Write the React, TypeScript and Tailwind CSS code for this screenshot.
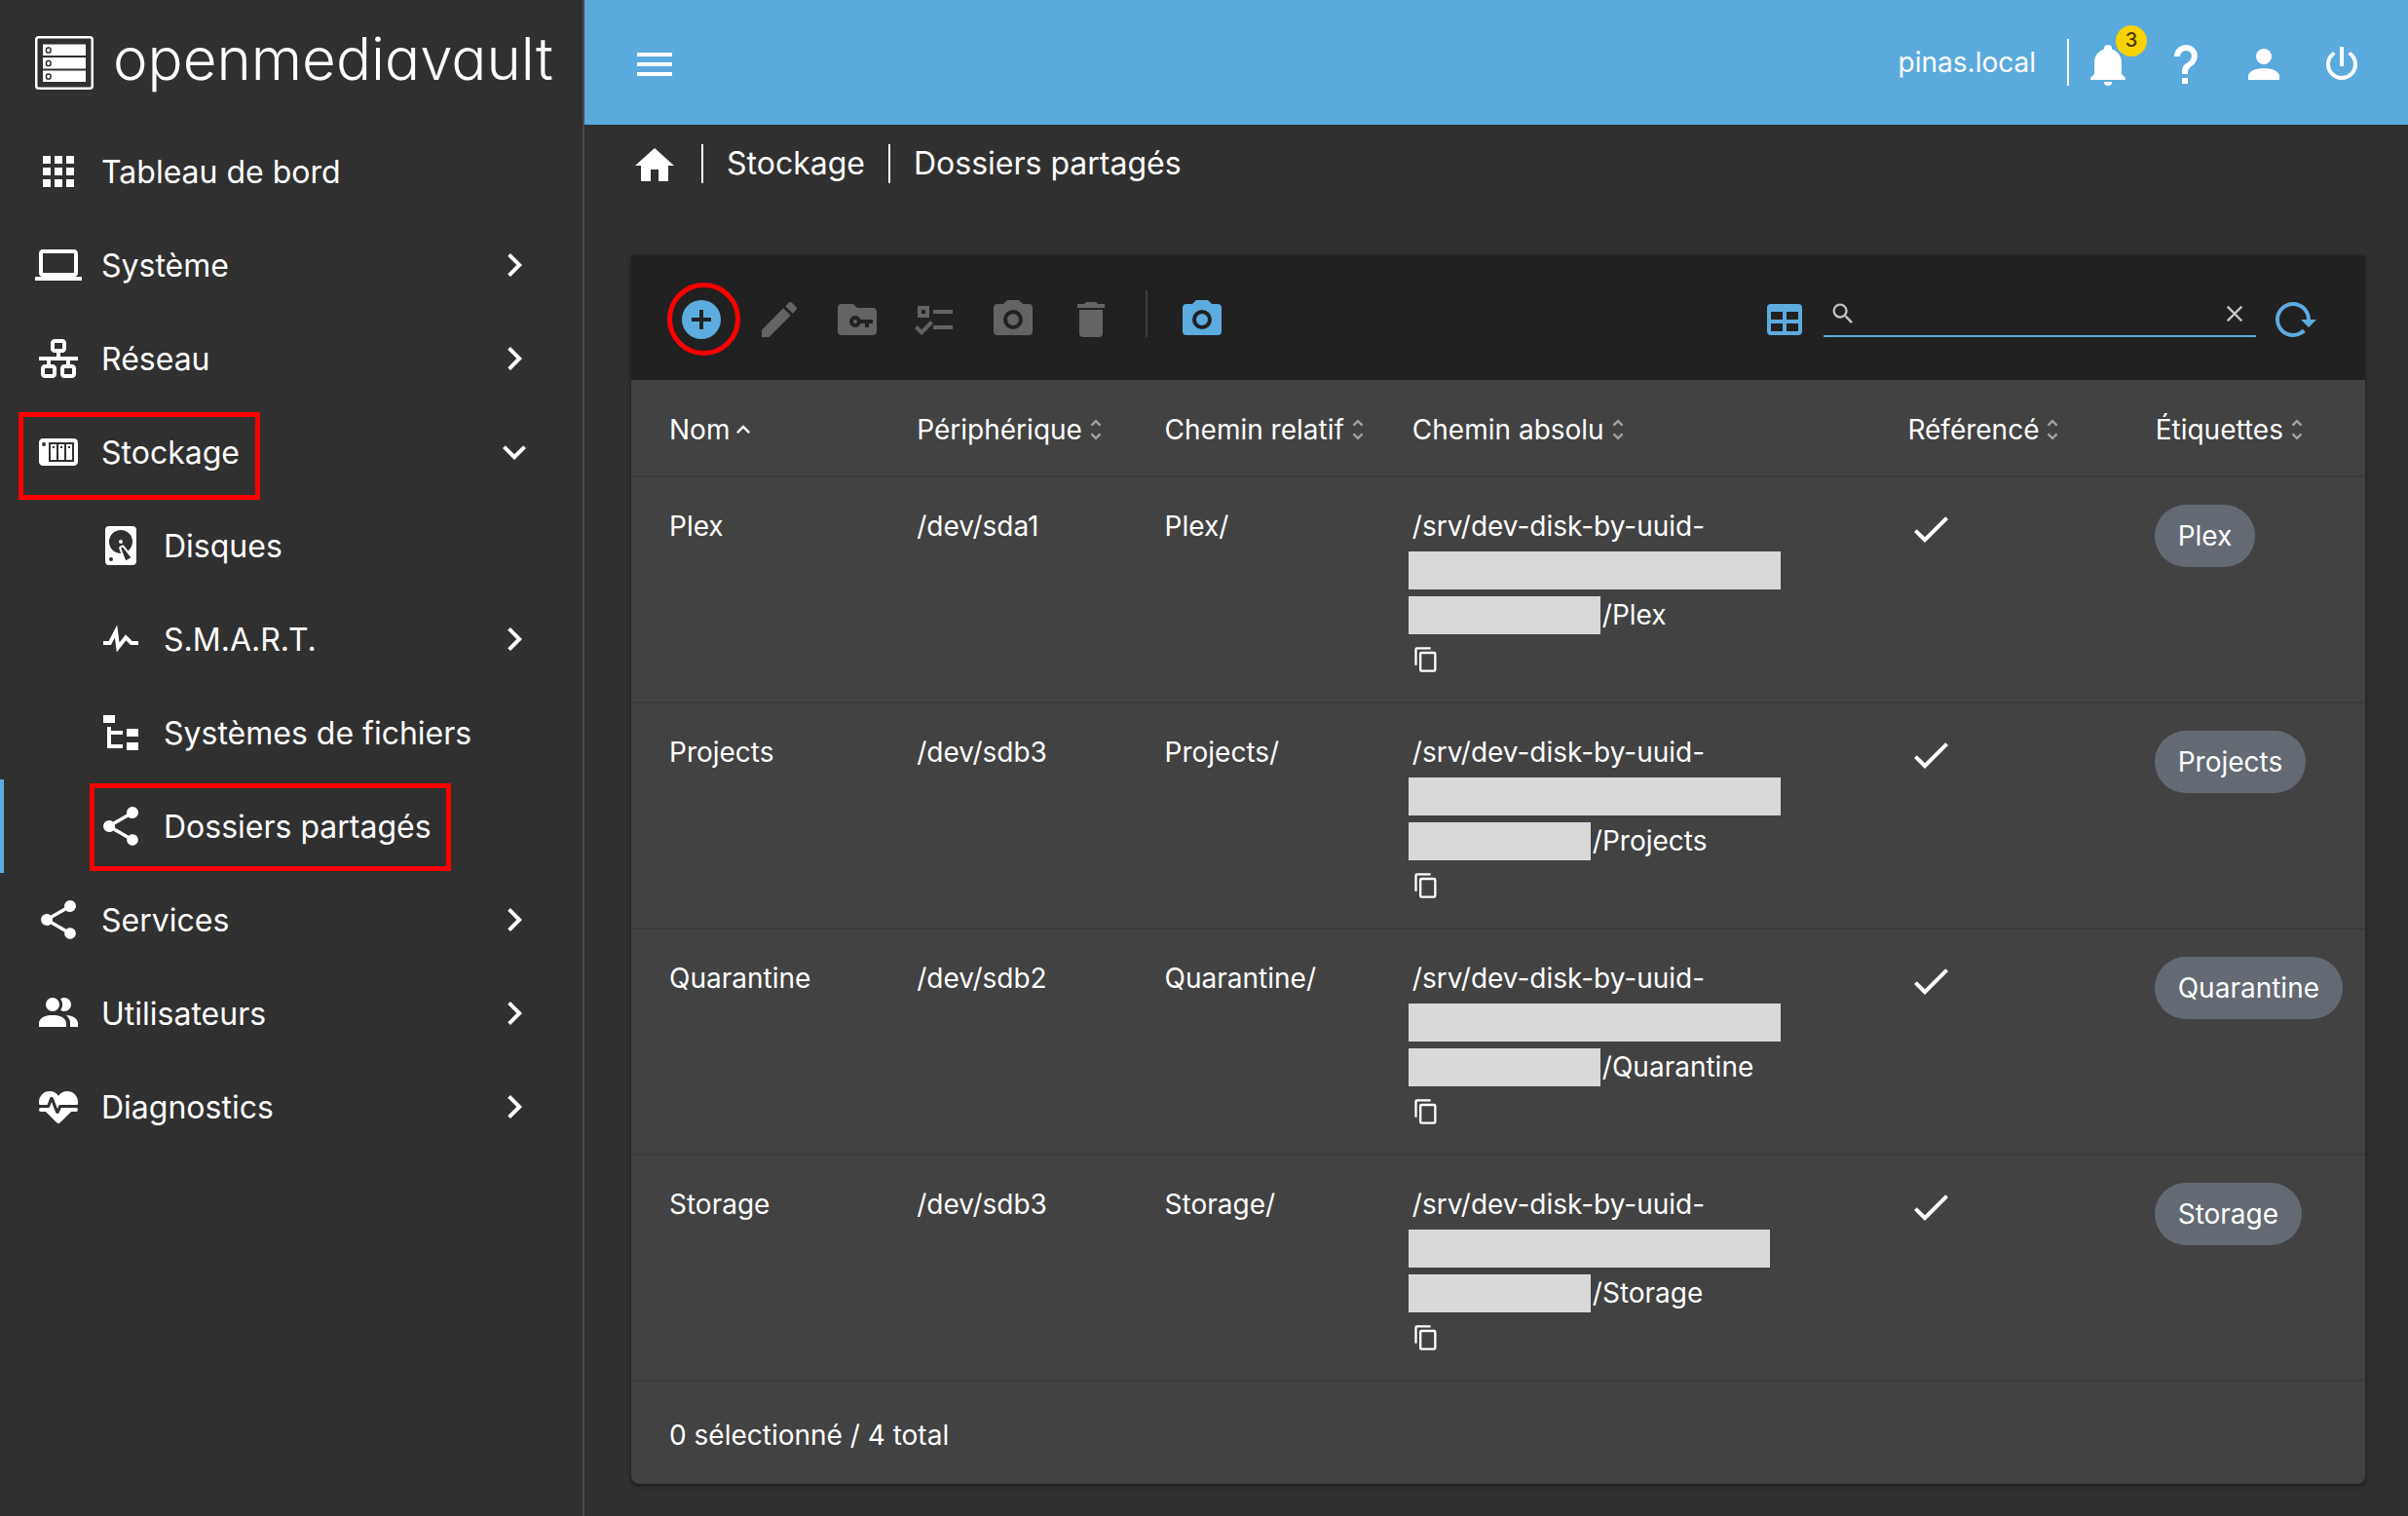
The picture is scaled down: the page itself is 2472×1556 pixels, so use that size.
import React from 'react';
import clsx from 'clsx';

const icons = {
  apps: 'M16,20H20V16H16M16,14H20V10H16M10,8H14V4H10M16,8H20V4H16M10,14H14V10H10M4,14H8V10H4M4,20H8V16H4M10,20H14V16H10M4,8H8V4H4V8Z',
  laptop: 'M4,6H20V16H4M20,18A2,2 0 0,0 22,16V6C22,4.89 21.1,4 20,4H4C2.89,4 2,4.89 2,6V16A2,2 0 0,0 4,18H0V20H24V18H20Z',
  lan: 'M10,2C8.89,2 8,2.89 8,4V7C8,8.11 8.89,9 10,9H11V11H2V13H6V15H5C3.89,15 3,15.89 3,17V20C3,21.11 3.89,22 5,22H9C10.11,22 11,21.11 11,20V17C11,15.89 10.11,15 9,15H8V13H16V15H15C13.89,15 13,15.89 13,17V20C13,21.11 13.89,22 15,22H19C20.11,22 21,21.11 21,20V17C21,15.89 20.11,15 19,15H18V13H22V11H13V9H14C15.11,9 16,8.11 16,7V4C16,2.89 15.11,2 14,2H10M10,4H14V7H10V4M5,17H9V20H5V17M15,17H19V20H15V17Z',
  nas: 'M4,5C2.89,5 2,5.89 2,7V17C2,18.11 2.89,19 4,19H20C21.11,19 22,18.11 22,17V7C22,5.89 21.11,5 20,5H4M4.5,7A1,1 0 0,1 5.5,8A1,1 0 0,1 4.5,9A1,1 0 0,1 3.5,8A1,1 0 0,1 4.5,7M7,7H20V17H7V7M8,8V16H11V8H8M12,8V16H15V8H12M16,8V16H19V8H16M9,9H10V10H9V9M13,9H14V10H13V9M17,9H18V10H17V9Z',
  harddisk: 'M6,2H18A2,2 0 0,1 20,4V20A2,2 0 0,1 18,22H6A2,2 0 0,1 4,20V4A2,2 0 0,1 6,2M12,4A6,6 0 0,0 6,10C6,13.31 8.69,16 12.1,16L11.22,13.77C10.95,13.29 11.11,12.68 11.59,12.4L12.45,11.9C12.93,11.63 13.54,11.79 13.82,12.27L15.74,14.69C17.12,13.59 18,11.9 18,10A6,6 0 0,0 12,4M12,9A1,1 0 0,1 13,10A1,1 0 0,1 12,11A1,1 0 0,1 11,10A1,1 0 0,1 12,9M7,18A1,1 0 0,0 6,19A1,1 0 0,0 7,20A1,1 0 0,0 8,19A1,1 0 0,0 7,18M12.09,13.27L14.58,19.58L17.17,18.08L12.95,12.77L12.09,13.27Z',
  pulse: 'M3,13H5.79L10.1,4.79L11.28,13.75L14.5,9.66L17.83,13H21V15H17L14.67,12.67L9.92,18.73L8.94,11.31L7,15H3V13Z',
  fileTree: 'M3,3H9V7H3V3M15,10H21V14H15V10M15,17H21V21H15V17M13,13H7V18H13V20H7L5,20V9H7V11H13V13Z',
  share: 'M18,16.08C17.24,16.08 16.56,16.38 16.04,16.85L8.91,12.7C8.96,12.47 9,12.24 9,12C9,11.76 8.96,11.53 8.91,11.3L15.96,7.19C16.5,7.69 17.21,8 18,8A3,3 0 0,0 21,5A3,3 0 0,0 18,2A3,3 0 0,0 15,5C15,5.24 15.04,5.47 15.09,5.7L8.04,9.81C7.5,9.31 6.79,9 6,9A3,3 0 0,0 3,12A3,3 0 0,0 6,15C6.79,15 7.5,14.69 8.04,14.19L15.16,18.34C15.11,18.55 15.08,18.77 15.08,19C15.08,20.61 16.39,21.91 18,21.91C19.61,21.91 20.92,20.61 20.92,19A2.92,2.92 0 0,0 18,16.08Z',
  users: 'M16 17V19H2V17S2 13 9 13 16 17 16 17M12.5 7.5A3.5 3.5 0 1 0 9 11A3.5 3.5 0 0 0 12.5 7.5M15.94 13A5.32 5.32 0 0 1 18 17V19H22V17S22 13.37 15.94 13M15 4A3.39 3.39 0 0 0 13.07 4.59A5 5 0 0 1 13.07 10.41A3.39 3.39 0 0 0 15 11A3.5 3.5 0 0 0 15 4Z',
  heartPulse: 'M7.5,4A5.5,5.5 0 0,0 2,9.5C2,10 2.09,10.5 2.22,11H6.3L7.57,7.63C7.87,6.83 9.05,6.75 9.43,7.63L11.5,13L12.09,11.58C12.22,11.25 12.57,11 13,11H21.78C21.91,10.5 22,10 22,9.5A5.5,5.5 0 0,0 16.5,4C14.64,4 13,4.93 12,6.34C11,4.93 9.36,4 7.5,4V4M3,12.5A1,1 0 0,0 2,13.5A1,1 0 0,0 3,14.5H5.44L11,20C12,20.9 12,20.9 13,20L18.56,14.5H21A1,1 0 0,0 22,13.5A1,1 0 0,0 21,12.5H13.4L12.47,14.8C12.07,15.81 10.92,15.67 10.55,14.83L8.5,9.5L7.54,11.83C7.39,12.21 7.05,12.5 6.6,12.5H3Z',
  menu: 'M3,6H21V8H3V6M3,11H21V13H3V11M3,16H21V18H3V16Z',
  bell: 'M21,19V20H3V19L5,17V11C5,7.9 7.03,5.17 10,4.29C10,4.19 10,4.1 10,4A2,2 0 0,1 12,2A2,2 0 0,1 14,4C14,4.1 14,4.19 14,4.29C16.97,5.17 19,7.9 19,11V17L21,19M14,21A2,2 0 0,1 12,23A2,2 0 0,1 10,21',
  help: 'M10,19H13V22H10V19M12,2C17.35,2.22 19.68,7.62 16.5,11.67C15.67,12.67 14.33,13.33 13.67,14.17C13,15 13,16 13,17H10C10,15.33 10,13.92 10.67,12.92C11.33,11.92 12.67,11.33 13.5,10.67C15.92,8.43 15.32,5.26 12,5A3,3 0 0,0 9,8H6A6,6 0 0,1 12,2Z',
  account: 'M12,4A4,4 0 0,1 16,8A4,4 0 0,1 12,12A4,4 0 0,1 8,8A4,4 0 0,1 12,4M12,14C16.42,14 20,15.79 20,18V20H4V18C4,15.79 7.58,14 12,14Z',
  power: 'M16.56,5.44L15.11,6.89C16.84,7.94 18,9.83 18,12A6,6 0 0,1 12,18A6,6 0 0,1 6,12C6,9.83 7.16,7.94 8.88,6.88L7.44,5.44C5.36,6.88 4,9.28 4,12A8,8 0 0,0 12,20A8,8 0 0,0 20,12C20,9.28 18.64,6.88 16.56,5.44M13,3H11V13H13',
  home: 'M10,20V14H14V20H19V12H22L12,3L2,12H5V20H10Z',
  plusCircle: 'M17,13H13V17H11V13H7V11H11V7H13V11H17M12,2A10,10 0 0,0 2,12A10,10 0 0,0 12,22A10,10 0 0,0 22,12A10,10 0 0,0 12,2Z',
  pencil: 'M20.71,7.04C21.1,6.65 21.1,6 20.71,5.63L18.37,3.29C18,2.9 17.35,2.9 16.96,3.29L15.12,5.12L18.87,8.87M3,17.25V21H6.75L17.81,9.93L14.06,6.18L3,17.25Z',
  folderKey: 'M10,4L12,6H20A2,2 0 0,1 22,8V18A2,2 0 0,1 20,20H4A2,2 0 0,1 2,18V6A2,2 0 0,1 4,4H10M13.83,12A3,3 0 1,0 13.83,14H16V16H18V14H20V12H13.83M11,12A1,1 0 0,1 12,13A1,1 0 0,1 11,14A1,1 0 0,1 10,13A1,1 0 0,1 11,12Z',
  checklist: 'M3,5H9V11H3V5M5,7V9H7V7H5M11,7H21V9H11V7M11,15H21V17H11V15M5,20L1.5,16.5L2.91,15.09L5,17.17L9.59,12.59L11,14L5,20Z',
  camera: 'M4,4H7L9,2H15L17,4H20A2,2 0 0,1 22,6V18A2,2 0 0,1 20,20H4A2,2 0 0,1 2,18V6A2,2 0 0,1 4,4M12,7A5,5 0 0,0 7,12A5,5 0 0,0 12,17A5,5 0 0,0 17,12A5,5 0 0,0 12,7M12,9A3,3 0 0,1 15,12A3,3 0 0,1 12,15A3,3 0 0,1 9,12A3,3 0 0,1 12,9Z',
  trash: 'M19,4H15.5L14.5,3H9.5L8.5,4H5V6H19M6,19A2,2 0 0,0 8,21H16A2,2 0 0,0 18,19V7H6V19Z',
  table: 'M5,4H19A2,2 0 0,1 21,6V18A2,2 0 0,1 19,20H5A2,2 0 0,1 3,18V6A2,2 0 0,1 5,4M5,8V12H11V8H5M13,8V12H19V8H13M5,14V18H11V14H5M13,14V18H19V14H13Z',
  magnify: 'M9.5,3A6.5,6.5 0 0,1 16,9.5C16,11.11 15.41,12.59 14.44,13.73L14.71,14H15.5L20.5,19L19,20.5L14,15.5V14.71L13.73,14.44C12.59,15.41 11.11,16 9.5,16A6.5,6.5 0 0,1 3,9.5A6.5,6.5 0 0,1 9.5,3M9.5,5C7,5 5,7 5,9.5C5,12 7,14 9.5,14C12,14 14,12 14,9.5C14,7 12,5 9.5,5Z',
  close: 'M19,6.41L17.59,5L12,10.59L6.41,5L5,6.41L10.59,12L5,17.59L6.41,19L12,13.41L17.59,19L19,17.59L13.41,12L19,6.41Z',
  reload: 'M2 12C2 16.97 6.03 21 11 21C13.39 21 15.68 20.06 17.4 18.4L15.9 16.9C14.63 18.25 12.86 19 11 19C4.76 19 1.64 11.46 6.05 7.05C10.46 2.64 18 5.77 18 12H15L19 16H19.1L23 12H20C20 7.03 15.97 3 11 3C6.03 3 2 7.03 2 12Z',
  check: 'M21,7L9,19L3.5,13.5L4.91,12.09L9,16.17L19.59,5.59L21,7Z',
  copy: 'M19,21H8V7H19M19,5H8A2,2 0 0,0 6,7V21A2,2 0 0,0 8,23H19A2,2 0 0,0 21,21V7A2,2 0 0,0 19,5M16,1H4A2,2 0 0,0 2,3V17H4V3H16V1Z',
  chevronRight: 'M8.59,16.58L13.17,12L8.59,7.41L10,6L16,12L10,18L8.59,16.58Z',
  chevronDown: 'M7.41,8.58L12,13.17L16.59,8.58L18,10L12,16L6,10L7.41,8.58Z',
  chevronUp: 'M7.41,15.41L12,10.83L16.59,15.41L18,14L12,8L6,14L7.41,15.41Z',
  unfold: 'M12,18.17L8.83,15L7.42,16.41L12,21L16.59,16.41L15.17,15M12,5.83L15.17,9L16.58,7.59L12,3L7.41,7.59L8.83,9L12,5.83Z',
};

type IconName = keyof typeof icons;

const Icon: React.FC<{ name: IconName; className?: string }> = ({ name, className = 'size-12' }) => (
  <svg viewBox="0 0 24 24" fill="currentColor" fillRule="evenodd" className={clsx('shrink-0', className)} aria-hidden="true">
    <path d={icons[name]} />
  </svg>
);

interface NavItem {
  title: string;
  icon: IconName;
  sub?: boolean;
  arrow?: 'chevronRight' | 'chevronDown';
  active?: boolean;
  mark?: string;
}

const navItems: NavItem[] = [
  { title: 'Tableau de bord', icon: 'apps' },
  { title: 'Système', icon: 'laptop', arrow: 'chevronRight' },
  { title: 'Réseau', icon: 'lan', arrow: 'chevronRight' },
  { title: 'Stockage', icon: 'nas', arrow: 'chevronDown', mark: 'left-[19px] top-[7px] w-[248px]' },
  { title: 'Disques', icon: 'harddisk', sub: true },
  { title: 'S.M.A.R.T.', icon: 'pulse', sub: true, arrow: 'chevronRight' },
  { title: 'Systèmes de fichiers', icon: 'fileTree', sub: true },
  { title: 'Dossiers partagés', icon: 'share', sub: true, active: true, mark: 'left-[92px] top-[4px] w-[371px]' },
  { title: 'Services', icon: 'share', arrow: 'chevronRight' },
  { title: 'Utilisateurs', icon: 'users', arrow: 'chevronRight' },
  { title: 'Diagnostics', icon: 'heartPulse', arrow: 'chevronRight' },
];

const Logo: React.FC = () => (
  <a href="#/" className="flex h-32 items-center gap-5 pl-9">
    <svg viewBox="0 0 60 55" className="h-[55px] w-[60px] shrink-0" aria-hidden="true">
      <rect x="1.25" y="1.25" width="57.5" height="52.5" rx="2.5" fill="none" stroke="white" strokeWidth="2.5" />
      {[8.5, 22, 35.5].map((y) => (
        <g key={y}>
          <rect x="8" y={y} width="44" height="11.5" fill="white" />
          <rect x="11.5" y={y + 3.5} width="4.5" height="5" rx="1.8" fill="white" stroke="#303030" strokeWidth="1.5" />
        </g>
      ))}
    </svg>
    <span className="mb-2 text-[60px] leading-none font-light [font-feature-settings:'cv11']">openmediavault</span>
  </a>
);

const Sidebar: React.FC = () => {
  return (
    <aside className="w-[600px] shrink-0 border-r-2 border-[#4a4a4a]">
      <Logo />
      <nav>
        <ul>
          {navItems.map((item) => (
            <li key={item.title} className="relative">
              <a
                href="#/"
                className={clsx(
                  'flex h-24 items-center gap-5 border-l-4 pr-[46px] text-[32px]',
                  item.sub ? 'pl-24' : 'pl-8',
                  item.active ? 'border-[#5dacdf]' : 'border-transparent',
                )}
              >
                <Icon name={item.icon} />
                <span className="grow pt-0.5">{item.title}</span>
                {item.arrow && <Icon name={item.arrow} />}
              </a>
              {item.mark && <span className={clsx('pointer-events-none absolute h-[90px] border-[5px] border-[#ff0000]', item.mark)} />}
            </li>
          ))}
        </ul>
      </nav>
    </aside>
  );
};

const IconButton: React.FC<{ name: IconName; label: string; className?: string; disabled?: boolean; children?: React.ReactNode }> = ({
  name,
  label,
  className,
  disabled,
  children,
}) => (
  <button type="button" aria-label={label} disabled={disabled} className={clsx('relative flex size-20 items-center justify-center', className)}>
    <Icon name={name} />
    {children}
  </button>
);

const Header: React.FC = () => (
  <header className="flex h-32 items-center bg-[#5aaade] pt-1 pr-7 pl-8">
    <IconButton name="menu" label="Menu" />
    <span className="mb-1 ml-auto text-[28px]">pinas.local</span>
    <span className="mb-1 ml-8 h-12 w-0.5 bg-white" />
    <IconButton name="bell" label="Notifications">
      <span className="absolute top-0 right-0 flex size-8 items-center justify-center rounded-full bg-[#f9d300] pb-0.5 text-[20px] font-medium text-[#4b3800]">
        3
      </span>
    </IconButton>
    <IconButton name="help" label="Aide" />
    <IconButton name="account" label="Compte" />
    <IconButton name="power" label="Arrêt" />
  </header>
);

const Breadcrumb: React.FC = () => (
  <nav className="flex h-[84px] items-center gap-6 text-[32px]">
    <a href="#/" aria-label="Accueil">
      <Icon name="home" />
    </a>
    <span className="mb-1 h-10 w-0.5 bg-white" />
    <a href="#/" className="mb-1">
      Stockage
    </a>
    <span className="mb-1 h-10 w-0.5 bg-white" />
    <a href="#/" className="mb-1">
      Dossiers partagés
    </a>
  </nav>
);

const Toolbar: React.FC = () => (
  <div className="flex h-32 items-center bg-[#212121] px-8 pt-1">
    <IconButton name="plusCircle" label="Créer" className="text-[#5dacdf]">
      <span className="pointer-events-none absolute top-0.5 left-[5px] size-[75px] rounded-full border-[5px] border-[#ff0000]" />
    </IconButton>
    <IconButton name="pencil" label="Éditer" className="text-[#646464]" disabled />
    <IconButton name="folderKey" label="Privilèges" className="text-[#646464]" disabled />
    <IconButton name="checklist" label="ACL" className="text-[#646464]" disabled />
    <IconButton name="camera" label="Instantané" className="text-[#646464]" disabled />
    <IconButton name="trash" label="Supprimer" className="text-[#646464]" disabled />
    <span className="mx-4 mb-3 h-12 w-0.5 bg-[#3c3c3c]" />
    <IconButton name="camera" label="Instantanés" className="text-[#5dacdf]" />
    <IconButton name="table" label="Colonnes" className="ml-auto text-[#5dacdf]" />
    <div className="mb-3 flex h-12 w-[444px] items-center border-b-2 border-[#5dacdf] pt-0.5 pr-2 pl-1.5 text-[#c4c4c4]">
      <Icon name="magnify" className="size-7" />
      <input type="text" aria-label="Rechercher" className="min-w-0 grow bg-transparent px-2 text-[28px] outline-none" />
      <button type="button" aria-label="Effacer">
        <Icon name="close" className="size-7" />
      </button>
    </div>
    <IconButton name="reload" label="Recharger" className="text-[#5dacdf]" />
  </div>
);

const columns = ['Nom', 'Périphérique', 'Chemin relatif', 'Chemin absolu', 'Référencé', 'Étiquettes'];

const folders = [
  { name: 'Plex', device: '/dev/sda1', first: 'w-[382px]', second: 'w-[197px]' },
  { name: 'Projects', device: '/dev/sdb3', first: 'w-[382px]', second: 'w-[187px]' },
  { name: 'Quarantine', device: '/dev/sdb2', first: 'w-[382px]', second: 'w-[197px]' },
  { name: 'Storage', device: '/dev/sdb3', first: 'w-[371px]', second: 'w-[187px]' },
];

const FolderTable: React.FC = () => (
  <table className="w-full table-fixed text-left align-top leading-[45px]">
    <thead>
      <tr className="h-[99px] border-b-2 border-[#3a3a3a]">
        {columns.map((column) => (
          <th key={column} className={clsx('pt-1 pl-[39px] font-normal whitespace-nowrap', column === 'Chemin absolu' ? 'w-2/7' : 'w-1/7')}>
            <button type="button" className="flex items-center">
              {column}
              {column === 'Nom' ? <Icon name="chevronUp" className="size-7" /> : <Icon name="unfold" className="size-7 text-[#a3a3a3]" />}
            </button>
          </th>
        ))}
      </tr>
    </thead>
    <tbody>
      {folders.map((folder) => (
        <tr key={folder.name} className="h-[232px] border-b-2 border-[#3a3a3a] align-top">
          <td className="pt-7 pl-[39px]">{folder.name}</td>
          <td className="pt-7 pl-[39px]">{folder.device}</td>
          <td className="pt-7 pl-[39px]">{folder.name}/</td>
          <td className="pt-7 pl-[39px]">
            <div>/srv/dev-disk-by-uuid-</div>
            <div className="-ml-1 flex h-[45px] items-center">
              <span className={clsx('h-[39px] bg-[#d9d9d9]', folder.first)} />
            </div>
            <div className="-ml-1 flex h-[46px] items-center gap-0.5">
              <span className={clsx('h-[39px] bg-[#d9d9d9]', folder.second)} />/{folder.name}
            </div>
            <button type="button" aria-label="Copier" className="flex h-[45px] items-center">
              <Icon name="copy" className="size-7" />
            </button>
          </td>
          <td className="pt-[29px] pl-[39px]">
            <Icon name="check" />
          </td>
          <td className="pt-[28px] pl-[38px]">
            <span className="inline-flex h-16 items-center rounded-full bg-[#646a73] px-6">{folder.name}</span>
          </td>
        </tr>
      ))}
    </tbody>
  </table>
);

const App: React.FC = () => {
  return (
    <div className="flex min-h-screen bg-[#303030] font-['Inter',sans-serif] text-white">
      <Sidebar />
      <div className="min-w-0 grow">
        <Header />
        <main className="pr-11 pb-8 pl-12">
          <Breadcrumb />
          <section className="mt-[50px] overflow-hidden rounded-b-lg bg-[#424242] text-[28px] shadow-[0_2px_4px_rgba(0,0,0,0.5)]">
            <Toolbar />
            <FolderTable />
            <div className="flex h-[105px] items-center pt-1 pl-[39px]">0 sélectionné / 4 total</div>
          </section>
        </main>
      </div>
    </div>
  );
};

export default App;
